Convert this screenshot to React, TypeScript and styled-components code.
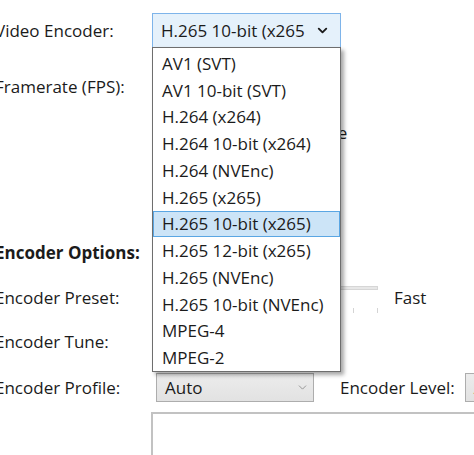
import { createGlobalStyle, styled } from "styled-components";
import { ChevronDown } from "lucide-react";

const GlobalStyle = createGlobalStyle`
    html, body {
        margin: 0;
        padding: 0;
        background: #ffffff;
    }
    body {
        font-family: "Open Sans", "Noto Sans", sans-serif;
        font-size: 17px;
        color: #1b1b1b;
        overflow: hidden;
    }
`;

const Window = styled.div`
    width: 474px;
    height: 455px;
    overflow: hidden;
`;

const Page = styled.div`
    margin-left: -5px;
    padding-top: 13px;
    width: 479px;
`;

const Row = styled.div<{ $top: number; $height: number }>`
    display: flex;
    align-items: center;
    margin-top: ${p => p.$top}px;
    height: ${p => p.$height}px;
`;

const Label = styled.div<{ $bold?: boolean }>`
    width: 161px;
    flex-shrink: 0;
    font-weight: ${p => (p.$bold ? 700 : 400)};
    white-space: nowrap;
`;

const Field = styled.div`
    display: flex;
    align-items: center;
    flex: 1;
    min-width: 0;
    height: 100%;
`;

const OpenCombo = styled.div`
    position: relative;
    margin-left: -4px;
    width: 189px;
    height: 35px;
    box-sizing: border-box;
    display: flex;
    align-items: center;
    background: #e5f1fb;
    border: 1px solid #7eb4ea;
`;

const ComboText = styled.div<{ $width: number }>`
    width: ${p => p.$width}px;
    padding-left: 8px;
    overflow: hidden;
    white-space: nowrap;
`;

const ChevronBox = styled.div<{ $color: string }>`
    flex: 1;
    display: flex;
    justify-content: center;
    align-items: center;
    color: ${p => p.$color};
`;

const DropList = styled.ul`
    position: absolute;
    top: 100%;
    left: -1px;
    width: 189px;
    margin: 0;
    padding: 2px 0 0;
    box-sizing: border-box;
    list-style: none;
    background: #ffffff;
    border: 1px solid #6e6e6e;
    box-shadow: 3px 3px 4px rgba(0, 0, 0, 0.35);
    z-index: 10;
`;

const DropItem = styled.li<{ $selected?: boolean }>`
    height: 26.75px;
    box-sizing: border-box;
    display: flex;
    align-items: center;
    padding-left: 8px;
    white-space: nowrap;
    background: ${p => (p.$selected ? "#cce4f7" : "transparent")};
    border: 1px solid ${p => (p.$selected ? "#5aa6e3" : "transparent")};
`;

const Combo = styled.div<{ $width: number }>`
    width: ${p => p.$width}px;
    height: 29px;
    box-sizing: border-box;
    display: flex;
    align-items: center;
    background: linear-gradient(#ececec, #e2e2e2);
    border: 1px solid #adadad;
    flex-shrink: 0;
`;

const RadioGroup = styled.label`
    display: flex;
    align-items: center;
    gap: 6px;
    padding-left: 14px;
    white-space: nowrap;
`;

const RadioDot = styled.span<{ $checked?: boolean }>`
    width: 13px;
    height: 13px;
    box-sizing: border-box;
    border-radius: 50%;
    border: 1px solid #333;
    background: ${p => (p.$checked ? "radial-gradient(#333 0 3px, #fff 4px)" : "#fff")};
`;

const Slider = styled.div`
    position: relative;
    width: 222px;
    height: 100%;
`;

const Track = styled.div`
    position: absolute;
    top: 9px;
    left: 0;
    right: 0;
    height: 4px;
    background: #e7e7e7;
    border: 1px solid #d6d6d6;
    box-sizing: border-box;
`;

const Thumb = styled.div`
    position: absolute;
    top: 1px;
    left: 96px;
    width: 11px;
    height: 22px;
    background: #007ad9;
`;

const Ticks = styled.div`
    position: absolute;
    top: 31px;
    left: 4px;
    right: 0;
    height: 5px;
    background: repeating-linear-gradient(
        to left,
        #d4d4d4 0 1px,
        transparent 1px 24px
    );
`;

const SliderValue = styled.span`
    margin-left: 16px;
`;

const LevelLabel = styled.span`
    margin-left: 26px;
    margin-right: 10px;
    white-space: nowrap;
`;

const Options = styled.div`
    margin-top: 10px;
    margin-left: 156px;
    height: 80px;
    border: 2px solid #c2c2c2;
    border-right: none;
    background: #ffffff;
`;

const encoders = [
    "AV1 (SVT)",
    "AV1 10-bit (SVT)",
    "H.264 (x264)",
    "H.264 10-bit (x264)",
    "H.264 (NVEnc)",
    "H.265 (x265)",
    "H.265 10-bit (x265)",
    "H.265 12-bit (x265)",
    "H.265 (NVEnc)",
    "H.265 10-bit (NVEnc)",
    "MPEG-4",
    "MPEG-2",
];

function App() {
    const selected = "H.265 10-bit (x265)";

    return <>
        <GlobalStyle />
        <Window>
            <Page>
                <Row $top={0} $height={35}>
                    <Label>Video Encoder:</Label>
                    <Field>
                        <OpenCombo>
                            <ComboText $width={144}>{selected}</ComboText>
                            <ChevronBox $color="#1b1b1b">
                                <ChevronDown size={15} strokeWidth={3} />
                            </ChevronBox>
                            <DropList>
                                {encoders.map(enc =>
                                    <DropItem key={enc} $selected={enc === selected}>{enc}</DropItem>
                                )}
                            </DropList>
                        </OpenCombo>
                    </Field>
                </Row>
                <Row $top={24} $height={29}>
                    <Label>Framerate (FPS):</Label>
                    <Field>
                        <Combo $width={157}>
                            <ComboText $width={126}>Same as source</ComboText>
                        </Combo>
                    </Field>
                </Row>
                <Row $top={20} $height={22}>
                    <Label />
                    <RadioGroup><RadioDot $checked />Constant Framerate</RadioGroup>
                </Row>
                <Row $top={2} $height={22}>
                    <Label />
                    <RadioGroup><RadioDot />Peak Framerate</RadioGroup>
                </Row>
                <Row $top={73} $height={24}>
                    <Label $bold>Encoder Options:</Label>
                </Row>
                <Row $top={13} $height={40}>
                    <Label>Encoder Preset:</Label>
                    <Field>
                        <Slider>
                            <Track />
                            <Thumb />
                            <Ticks />
                        </Slider>
                        <SliderValue>Fast</SliderValue>
                    </Field>
                </Row>
                <Row $top={10} $height={29}>
                    <Label>Encoder Tune:</Label>
                    <Field>
                        <Combo $width={157}>
                            <ComboText $width={126}>None</ComboText>
                        </Combo>
                    </Field>
                </Row>
                <Row $top={17} $height={29}>
                    <Label>Encoder Profile:</Label>
                    <Field>
                        <Combo $width={158}>
                            <ComboText $width={126}>Auto</ComboText>
                            <ChevronBox $color="#8a8a8a">
                                <ChevronDown size={13} strokeWidth={1.6} />
                            </ChevronBox>
                        </Combo>
                        <LevelLabel>Encoder Level:</LevelLabel>
                        <Combo $width={120}>
                            <ComboText $width={100}>Auto</ComboText>
                        </Combo>
                    </Field>
                </Row>
                <Options />
            </Page>
        </Window>
    </>
}
export default App
